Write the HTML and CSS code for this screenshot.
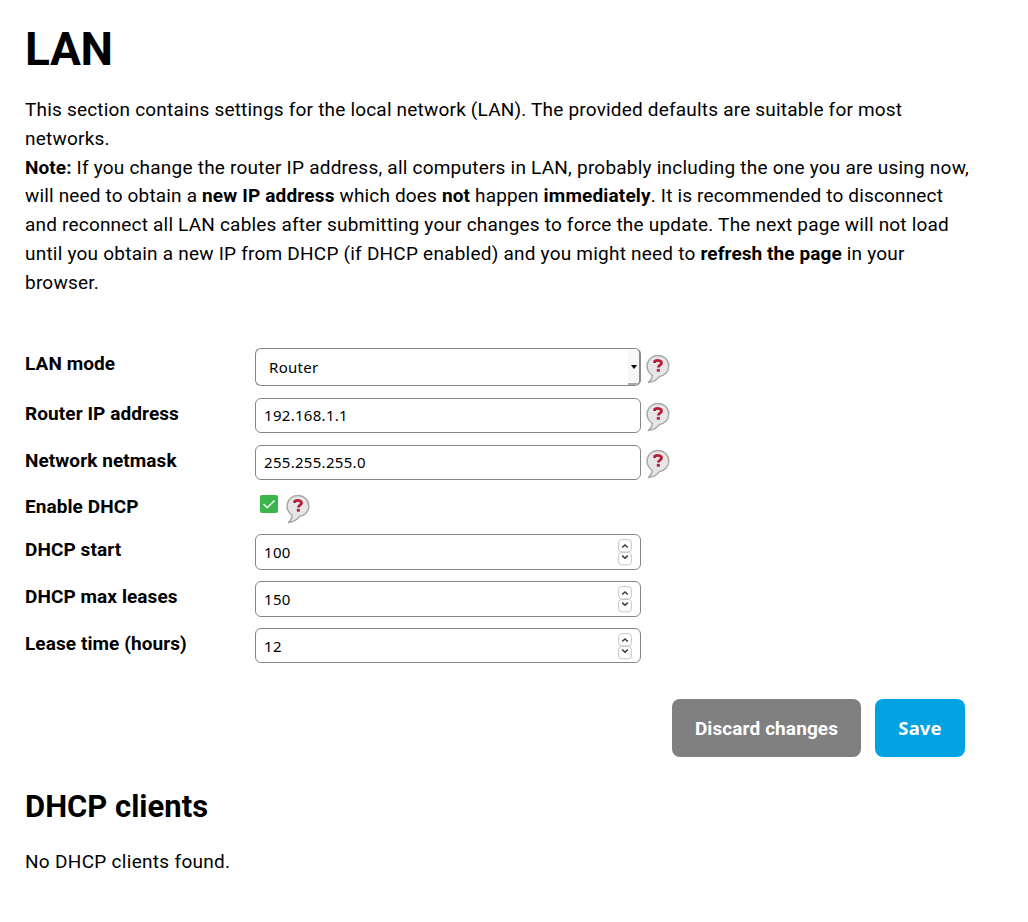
FILE: index.html
```html
<!DOCTYPE html>
<html lang="en">
<head>
<meta charset="utf-8">
<title>LAN</title>
<link rel="stylesheet" href="styles.css">
</head>
<body>
<svg class="defs" width="0" height="0" aria-hidden="true">
  <symbol id="help" viewBox="0 0 24 30">
    <path d="M12 1.400A10.800 10.800 0 0 1 22.800 12.200c0 5.300-4 9.600-9.400 10.400C10.800 26.300 7 28 2.100 28.600c2.600-1.800 3.800-3.800 4.100-7.200A10.800 10.800 0 0 1 12 1.400Z" fill="#e6e6e6" stroke="#a9a9a9" stroke-width="1.500"/>
    <path d="M8.700 9.100V7.400c2-1.500 6.800-1.300 6.800 1.500 0 2.300-3.200 2.100-3.200 4.600" fill="none" stroke="#b81d35" stroke-width="2.800"/>
    <path d="M10.800 14.900h3v2.800h-3z" fill="#b81d35"/>
  </symbol>
  <symbol id="spin" viewBox="0 0 14 27">
    <rect x=".6" y=".6" width="12.800" height="12.300" rx="3" fill="#fff" stroke="#c5c7cd"/>
    <rect x=".6" y="13.500" width="12.800" height="12.300" rx="3" fill="#fff" stroke="#c5c7cd"/>
    <path d="m4.200 8.500 2.800-2.600 2.800 2.600M4.200 16.600 7 19.200l2.800-2.600" fill="none" stroke="#3a3a3a" stroke-width="1.500"/>
  </symbol>
</svg>
<main>
  <h1>LAN</h1>
  <p class="intro"><span class="snug">This section contains settings for the local network (LAN). The provided defaults are suitable for most</span><br>networks.<br>
  <span class="loose"><b>Note:</b> If you change the router IP address, all computers in LAN, probably including the one you are using now,</span><br>
  <span class="tight">will need to obtain a <b>new IP address</b> which does <b>not</b> happen <b>immediately</b>. It is recommended to disconnect</span><br>
  <span class="snug">and reconnect all LAN cables after submitting your changes to force the update. The next page will not load</span><br>
  <span class="loose">until you obtain a new IP from DHCP (if DHCP enabled) and you might need to <b>refresh the page</b> in your</span><br>browser.</p>
  <form>
    <div class="row mode"><label>LAN mode</label><div class="field select"><span>Router</span><i class="drop"></i></div><svg class="help"><use href="#help"/></svg></div>
    <div class="row"><label>Router IP address</label><div class="field"><span>192.168.1.1</span></div><svg class="help"><use href="#help"/></svg></div>
    <div class="row"><label>Network netmask</label><div class="field"><span>255.255.255.0</span></div><svg class="help"><use href="#help"/></svg></div>
    <div class="row toggle"><label>Enable DHCP</label><svg class="check" viewBox="0 0 18 18"><rect width="18" height="18" rx="2" fill="#3bb54a"/><path d="m3.500 9 3.700 3.700 7.300-7.300" fill="none" stroke="#fff" stroke-width="1.400"/></svg><svg class="help"><use href="#help"/></svg></div>
    <div class="row"><label>DHCP start</label><div class="field number"><span>100</span><svg class="spin"><use href="#spin"/></svg></div></div>
    <div class="row"><label>DHCP max leases</label><div class="field number"><span>150</span><svg class="spin"><use href="#spin"/></svg></div></div>
    <div class="row"><label>Lease time (hours)</label><div class="field number last"><span>12</span><svg class="spin"><use href="#spin"/></svg></div></div>
    <div class="actions"><button class="discard" type="button">Discard changes</button><button class="save" type="button">Save</button></div>
  </form>
  <h2>DHCP clients</h2>
  <p class="empty">No DHCP clients found.</p>
</main>
</body>
</html>
```
FILE: styles.css
```css
* { box-sizing: border-box; }
body { margin: 0; background: #fff; color: #000; font-family: Roboto, sans-serif; font-size: 19px; line-height: 28.800px; letter-spacing: .3px; }
.defs { display: block; height: 0; }
main { padding: 19px 25px 0; }
h1 { margin: 0; font-size: 46px; line-height: 60px; letter-spacing: -.3px; }
p { margin: 0; white-space: nowrap; }
.intro { margin-top: 17px; height: 252px; letter-spacing: .22px; }
.loose { letter-spacing: .223px; }
.loose b { letter-spacing: .08px; }
.snug { letter-spacing: .195px; }
.tight { letter-spacing: .163px; }
.row { display: flex; align-items: flex-start; height: 47px; }
.row.mode { height: 50px; }
.row.toggle { height: 42px; }
label { width: 230px; font-size: 19px; font-weight: 700; line-height: 31px; letter-spacing: .08px; }
.toggle label { line-height: 29px; }
.field { display: flex; align-items: center; width: 386px; height: 35px; padding: 0 8px 1px; border: 1px solid #858585; border-radius: 6px; font-family: "Noto Sans", sans-serif; font-size: 15px; letter-spacing: .3px; line-height: 20px; }
.select { height: 38px; padding: 0 0 0 13px; overflow: hidden; border-right: 2px solid #8a8a8a; }
.drop { display: flex; align-items: center; justify-content: center; width: 11px; height: 36px; margin-left: auto; background: #f6f7f8; border-bottom: 2px solid #aaa; }
.drop::after { content: ""; flex: none; margin: 2px 0 0 1px; border: 3.500px solid transparent; border-top: 4px solid #000; border-bottom: 0; border-left-width: 3px; border-right-width: 3px; }
.number { height: 36px; padding-bottom: 0; }
.last { height: 35px; }
.help { width: 24px; height: 30px; margin: 4px 0 0 5px; }
.mode .help { margin-top: 6px; }
.check { width: 18px; height: 18px; margin: 3px 0 0 5px; }
.toggle .help { margin: 2px 0 0 8px; }
.spin { width: 14px; height: 27px; margin-left: auto; }
.last .spin { margin-top: 1px; }
.actions { display: flex; justify-content: flex-end; gap: 14px; margin: 24px 38px 0 0; }
button { height: 58px; padding: 0; border: 0; border-radius: 8px; color: #fff; font: 700 19px Roboto, sans-serif; letter-spacing: .1px; }
.discard { width: 189px; background: #808080; }
.save { width: 90px; padding-bottom: 2px; background: #00a2e2; font-family: "Noto Sans", sans-serif; font-size: 18.500px; }
h2 { margin: 30px 0 0; font-size: 31px; line-height: 40px; letter-spacing: 0; }
.empty { margin-top: 21px; }
```
